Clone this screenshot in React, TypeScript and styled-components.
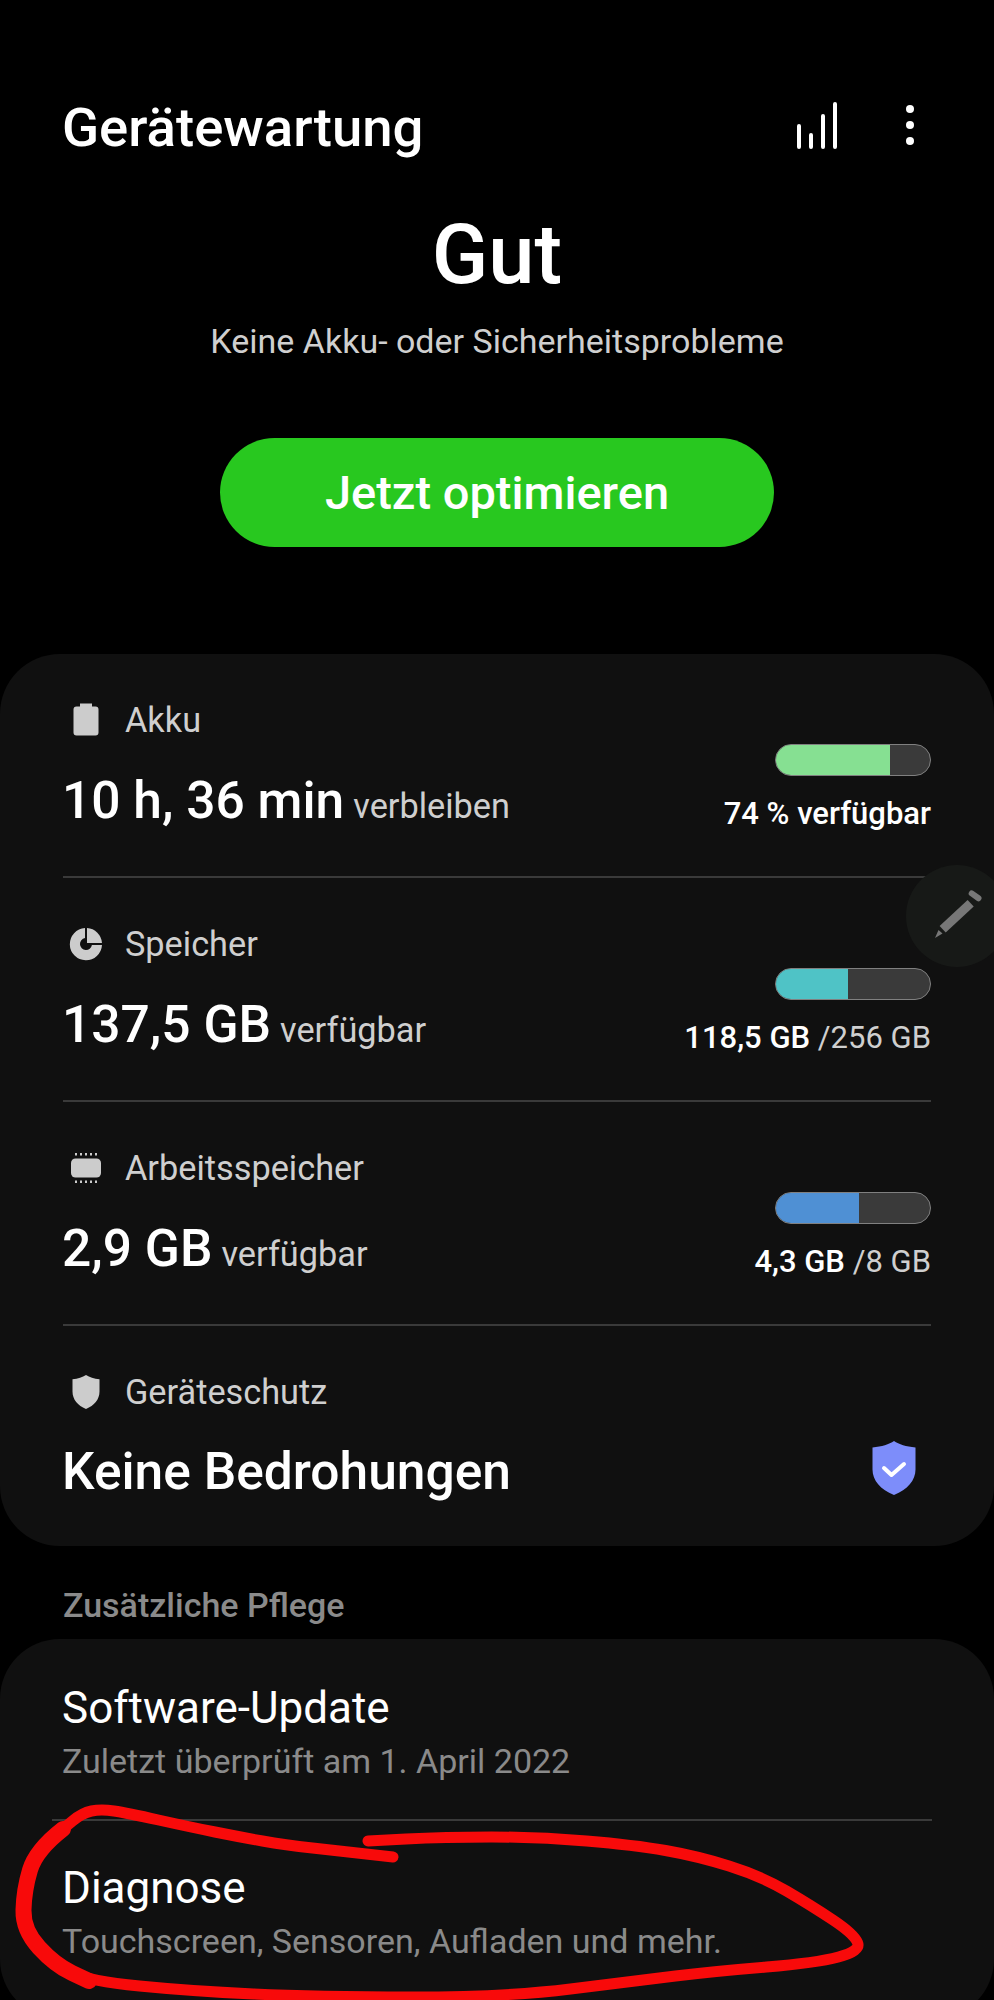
import React from "react";
import styled, { createGlobalStyle } from "styled-components";

const GlobalStyle = createGlobalStyle`
  html, body {
    margin: 0;
    padding: 0;
    background: #000;
  }
  * {
    box-sizing: border-box;
  }
`;

type Stat = {
  label: string;
  value: string;
  unit: string;
  icon: React.ReactNode;
  percent: number;
  color: string;
  strong: string;
  rest?: string;
};

const BatteryIcon = () => (
  <svg width="34" height="34" viewBox="0 0 34 34">
    <path d="M11 0.500h12v3h3.500a3 3 0 0 1 3 3v23a3 3 0 0 1-3 3h-19a3 3 0 0 1-3-3v-23a3 3 0 0 1 3-3H11z" fill="#cccccc" />
  </svg>
);

const StorageIcon = () => (
  <svg width="34" height="34" viewBox="0 0 34 34">
    <path
      d="M16 1v10.100a6 6 0 1 0 6.900 6.900h10.100a16.100 16.100 0 1 1-17-17z"
      fill="#cccccc"
    />
    <path d="M18 1a16 16 0 0 1 15 15H18z" fill="#cccccc" />
  </svg>
);

const ChipIcon = () => (
  <svg width="34" height="34" viewBox="0 0 34 34">
    <rect x="2" y="7.500" width="30" height="19" rx="4.500" fill="#cccccc" />
    <path d="M7 2v2.500M12 2v2.500M17 2v2.500M22 2v2.500M27 2v2.500M7 29.500v2.500M12 29.500v2.500M17 29.500v2.500M22 29.500v2.500M27 29.500v2.500" stroke="#cccccc" strokeWidth="2" />
  </svg>
);

const SmallShieldIcon = () => (
  <svg width="34" height="36" viewBox="0 0 34 36">
    <path d="M17 1c3.500 2.400 8 3.800 13.500 4.200v12.300c0 8-5.300 14-13.500 17.500C8.800 31.500 3.500 25.500 3.500 17.500V5.200C9 4.800 13.500 3.400 17 1z" fill="#cccccc" />
  </svg>
);

const stats: Stat[] = [
  {
    label: "Akku",
    value: "10 h, 36 min",
    unit: "verbleiben",
    icon: <BatteryIcon />,
    percent: 74,
    color: "#86e092",
    strong: "74 % verfügbar",
  },
  {
    label: "Speicher",
    value: "137,5 GB",
    unit: "verfügbar",
    icon: <StorageIcon />,
    percent: 47,
    color: "#4fc3c6",
    strong: "118,5 GB",
    rest: "/256 GB",
  },
  {
    label: "Arbeitsspeicher",
    value: "2,9 GB",
    unit: "verfügbar",
    icon: <ChipIcon />,
    percent: 54,
    color: "#4f90d4",
    strong: "4,3 GB",
    rest: "/8 GB",
  },
];

// hand drawn circle round the Diagnose row
const scribblePoints: [number, number][] = [
  [393, 1857], [340, 1851], [285, 1845], [240, 1837], [190, 1827], [127, 1813], [101, 1809], [82, 1813],
  [63, 1829], [36, 1850], [24, 1890], [23, 1930], [55, 1965], [89, 1981], [190, 1991], [317, 1997],
  [507, 1997], [634, 1981], [717, 1971], [816, 1963], [861, 1951], [854, 1934], [812, 1906], [761, 1876],
  [697, 1856], [634, 1845], [539, 1837], [444, 1837], [368, 1841],
];

const smoothPath = (points: [number, number][]) => {
  let d = `M${points[0][0]} ${points[0][1]}`;
  for (let i = 1; i < points.length - 1; i++) {
    const midX = (points[i][0] + points[i + 1][0]) / 2;
    const midY = (points[i][1] + points[i + 1][1]) / 2;
    d += ` Q${points[i][0]} ${points[i][1]} ${midX} ${midY}`;
  }
  const last = points[points.length - 1];
  return `${d} L${last[0]} ${last[1]}`;
};

const App: React.FC = () => {
  return (
    <Page>
      <GlobalStyle />
      <Header>
        <Title>Gerätewartung</Title>
        <HeaderIcons>
          <svg width="44" height="50" viewBox="0 0 44 50">
            <path d="M4 26v21M16 35v12M28 16v31M40 4v43" stroke="#fff" strokeWidth="4" strokeLinecap="round" />
          </svg>
          <svg width="12" height="44" viewBox="0 0 12 44">
            <circle cx="6" cy="6" r="4" fill="#fff" />
            <circle cx="6" cy="22" r="4" fill="#fff" />
            <circle cx="6" cy="38" r="4" fill="#fff" />
          </svg>
        </HeaderIcons>
      </Header>

      <Summary>
        <Status>Gut</Status>
        <StatusText>Keine Akku- oder Sicherheitsprobleme</StatusText>
        <OptimizeButton>Jetzt optimieren</OptimizeButton>
      </Summary>

      <Card>
        {stats.map((stat) => (
          <StatRow key={stat.label}>
            <RowLabel>
              <IconSlot>{stat.icon}</IconSlot>
              {stat.label}
            </RowLabel>
            <ValueLine>
              <Value>{stat.value}</Value>
              <Unit>{stat.unit}</Unit>
            </ValueLine>
            <Usage>
              <Bar>
                <BarFill $color={stat.color} style={{ width: `${stat.percent}%` }} />
              </Bar>
              <UsageText>
                <strong>{stat.strong}</strong>
                {stat.rest && <span> {stat.rest}</span>}
              </UsageText>
            </Usage>
          </StatRow>
        ))}
        <ProtectionRow>
          <RowLabel>
            <IconSlot>
              <SmallShieldIcon />
            </IconSlot>
            Geräteschutz
          </RowLabel>
          <ProtectionLine>
            <Value>Keine Bedrohungen</Value>
            <ProtectionBadge width="46" height="56" viewBox="0 0 46 56">
              <path d="M23 1c5 3.400 12 5.500 21.500 6.500v22c0 11-8 20-21.500 25.500C9.500 49.500 1.500 40.500 1.500 29.500v-22C11 6.500 18 4.400 23 1z" fill="#7d8dfa" />
              <path d="M13 28l7.500 7L33 24" fill="none" stroke="#fff" strokeWidth="4" strokeLinecap="round" strokeLinejoin="round" />
            </ProtectionBadge>
          </ProtectionLine>
        </ProtectionRow>
      </Card>

      <SectionTitle>Zusätzliche Pflege</SectionTitle>

      <LinkCard>
        <LinkRow>
          <LinkTitle>Software-Update</LinkTitle>
          <LinkText>Zuletzt überprüft am 1. April 2022</LinkText>
        </LinkRow>
        <LinkRow>
          <LinkTitle>Diagnose</LinkTitle>
          <LinkText>Touchscreen, Sensoren, Aufladen und mehr.</LinkText>
        </LinkRow>
      </LinkCard>

      <EditButton>
        <svg width="54" height="54" viewBox="0 0 54 54">
          <path d="M43.700 17.400L37.600 10.900 9.600 36.900 15.700 43.400z" fill="#777" />
          <path d="M41.700 4.400L48.500 9.300" stroke="#777" strokeWidth="6" strokeLinecap="round" />
          <path d="M8.500 41l4 3.500-7.500 4.500z" fill="#777" />
        </svg>
      </EditButton>

      <Scribble viewBox="0 0 994 2000" width="994" height="2000">
        <path d={smoothPath(scribblePoints)} fill="none" stroke="#f80a0a" strokeWidth="11" strokeLinecap="round" strokeLinejoin="round" />
        <path d={smoothPath(scribblePoints.slice(8, 14))} fill="none" stroke="#f80a0a" strokeWidth="16" strokeLinecap="round" />
      </Scribble>
    </Page>
  );
};

const Page = styled.div`
  position: relative;
  width: 994px;
  height: 2000px;
  overflow: hidden;
  background: #000;
  color: #fff;
  font-family: Roboto, "Liberation Sans", sans-serif;
`;

const Header = styled.header`
  display: flex;
  align-items: center;
  justify-content: space-between;
  height: 60px;
  margin-top: 97px;
  padding: 0 78px 0 62px;
`;

const Title = styled.h1`
  margin: 0;
  font-size: 54.5px;
  font-weight: 500;
  line-height: 60px;
  white-space: nowrap;
`;

const HeaderIcons = styled.div`
  display: flex;
  align-items: center;
  gap: 65px;
  padding-bottom: 5px;
`;

const Summary = styled.section`
  display: flex;
  flex-direction: column;
  align-items: center;
  margin-top: 53px;
`;

const Status = styled.div`
  font-size: 83px;
  font-weight: 500;
  line-height: 90px;
`;

const StatusText = styled.div`
  margin-top: 21px;
  font-size: 34px;
  line-height: 40px;
  color: #cfcfcf;
`;

const OptimizeButton = styled.button`
  width: 554px;
  height: 109px;
  margin-top: 77px;
  border: none;
  border-radius: 55px;
  background: #28c81f;
  color: #fff;
  font-family: inherit;
  font-size: 47px;
  font-weight: 500;
`;

const Card = styled.section`
  margin-top: 107px;
  height: 892px;
  border-radius: 60px;
  background: #101010;
`;

const StatRow = styled.div`
  display: grid;
  grid-template-columns: 1fr auto;
  grid-template-rows: 78px 96px;
  height: 224px;
  margin: 0 63px;
  padding-top: 27px;
  border-bottom: 2px solid #3a3a3a;
`;

const RowLabel = styled.div`
  display: flex;
  align-items: center;
  gap: 17px;
  grid-column: 1;
  height: 78px;
  font-size: 34.3px;
  color: #cfcfcf;
`;

const IconSlot = styled.span`
  display: flex;
  align-items: center;
  justify-content: center;
  width: 45px;
  height: 45px;
`;

const ValueLine = styled.div`
  display: flex;
  align-items: baseline;
  gap: 9px;
  grid-column: 1;
  padding-top: 7px;
`;

const Value = styled.span`
  margin-left: -1px;
  font-size: 51.5px;
  font-weight: 500;
  line-height: 70px;
`;

const Unit = styled.span`
  font-size: 34.3px;
  color: #cfcfcf;
`;

const Usage = styled.div`
  display: flex;
  flex-direction: column;
  align-items: flex-end;
  grid-column: 2;
  grid-row: 1 / span 2;
  padding-top: 63px;
`;

const Bar = styled.div`
  width: 156px;
  height: 32px;
  overflow: hidden;
  border: 1.5px solid #808080;
  border-radius: 16px;
  background: #3a3a3a;
`;

const BarFill = styled.div<{ $color: string }>`
  height: 100%;
  background: ${(p) => p.$color};
`;

const UsageText = styled.div`
  margin-top: 20px;
  font-size: 31px;
  line-height: 36px;
  color: #cfcfcf;

  strong {
    font-weight: 500;
    color: #fff;
  }
`;

const ProtectionRow = styled.div`
  display: flex;
  flex-direction: column;
  margin: 0 63px;
  padding-top: 27px;
`;

const ProtectionLine = styled.div`
  display: flex;
  align-items: center;
  justify-content: space-between;
  padding: 6px 14px 0 0;
`;

const ProtectionBadge = styled.svg`
  margin-bottom: 8px;
`;

const SectionTitle = styled.h2`
  margin: 40px 0 0 63px;
  font-size: 34px;
  font-weight: 500;
  line-height: 38px;
  color: #8a8a8a;
`;

const LinkCard = styled.section`
  margin-top: 15px;
  height: 380px;
  padding: 2px 62px 0 52px;
  border-radius: 60px;
  background: #101010;
`;

const LinkRow = styled.div`
  height: 180px;
  padding: 43px 0 0 11px;

  &:first-child {
    border-bottom: 2px solid #3a3a3a;
  }
`;

const LinkTitle = styled.div`
  margin-left: -1px;
  font-size: 44px;
  line-height: 48px;
`;

const LinkText = styled.div`
  margin-top: 9px;
  margin-left: -1px;
  font-size: 34px;
  line-height: 40px;
  color: #8a8a8a;
`;

const EditButton = styled.div`
  position: absolute;
  top: 865px;
  left: 906px;
  display: flex;
  align-items: center;
  justify-content: center;
  width: 102px;
  height: 102px;
  border-radius: 50%;
  background: #171917;
`;

const Scribble = styled.svg`
  position: absolute;
  top: 0;
  left: 0;
  pointer-events: none;
`;

export default App;
